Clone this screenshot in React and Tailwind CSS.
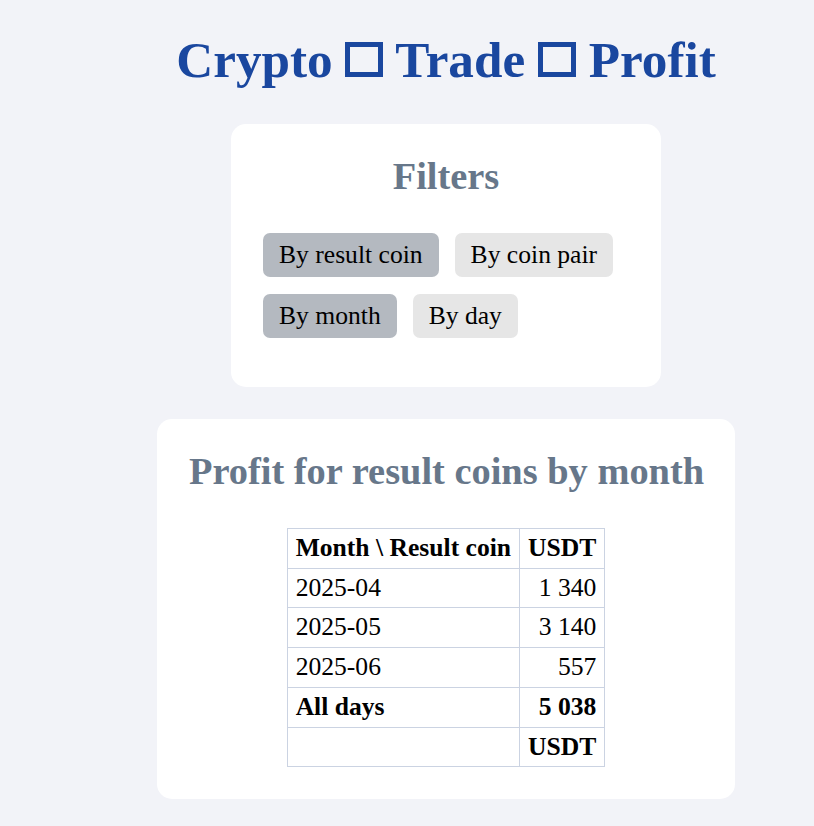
import React, { useState } from 'react';

const rows = [
  { month: '2025-04', value: '1\u00a0340' },
  { month: '2025-05', value: '3\u00a0140' },
  { month: '2025-06', value: '557' },
];

const Box = () => (
  <span className="inline-block w-[38px] h-[35px] border-[5px] border-current align-baseline" />
);

const FilterButton = ({ active, children, onClick }) => (
  <button
    onClick={onClick}
    className={`px-4 py-2 rounded-[7px] text-black leading-[28px] ${active ? 'bg-[#b4b9c0]' : 'bg-[#e6e6e6]'}`}
  >
    {children}
  </button>
);

const cell = 'border border-[#cbd3e2] px-2 py-[5px]';

export default function App() {
  const [group, setGroup] = useState('coin');
  const [period, setPeriod] = useState('month');

  return (
    <div
      className="min-h-screen bg-[#f2f3f8] text-[25.6px] text-black"
      style={{ fontFamily: '"Liberation Serif", "Times New Roman", serif' }}
    >
      <div className="ml-[78px] pt-[31px] pb-8 flex flex-col items-center">
        <h1 className="text-[51.2px] font-bold leading-[57px] text-[#1a479f] mb-[36px] whitespace-nowrap">
          Crypto <Box /> Trade <Box /> Profit
        </h1>

        {/* Filters */}
        <div className="w-[430px] bg-white rounded-[15px] pt-[31px] px-8 pb-[49px]">
          <h2 className="text-[38.4px] font-bold leading-[42px] text-center text-[#67778a] mb-[36px]">
            Filters
          </h2>
          <div className="flex flex-wrap gap-x-4">
            <FilterButton active={group === 'coin'} onClick={() => setGroup('coin')}>
              By result coin
            </FilterButton>
            <FilterButton active={group === 'pair'} onClick={() => setGroup('pair')}>
              By coin pair
            </FilterButton>
          </div>
          <div className="flex flex-wrap gap-x-4 mt-[17px]">
            <FilterButton active={period === 'month'} onClick={() => setPeriod('month')}>
              By month
            </FilterButton>
            <FilterButton active={period === 'day'} onClick={() => setPeriod('day')}>
              By day
            </FilterButton>
          </div>
        </div>

        {/* Profit table */}
        <div className="w-[578px] mt-8 bg-white rounded-[15px] pt-[31px] px-8 pb-8">
          <h2 className="text-[38.4px] font-bold leading-[42px] text-center text-[#67778a] mb-[36px] whitespace-nowrap">
            Profit for result coins by month
          </h2>
          <table className="mx-auto border-collapse leading-[28.7px]">
            <thead>
              <tr>
                <th className={`${cell} text-left whitespace-nowrap`}>Month \ Result coin</th>
                <th className={`${cell} text-right`}>USDT</th>
              </tr>
            </thead>
            <tbody>
              {rows.map((r) => (
                <tr key={r.month}>
                  <td className={cell}>{r.month}</td>
                  <td className={`${cell} text-right`}>{r.value}</td>
                </tr>
              ))}
              <tr>
                <td className={`${cell} font-bold`}>All days</td>
                <td className={`${cell} text-right font-bold`}>5{'\u00a0'}038</td>
              </tr>
              <tr>
                <td className={cell}></td>
                <td className={`${cell} text-right font-bold`}>USDT</td>
              </tr>
            </tbody>
          </table>
        </div>
      </div>
    </div>
  );
}
